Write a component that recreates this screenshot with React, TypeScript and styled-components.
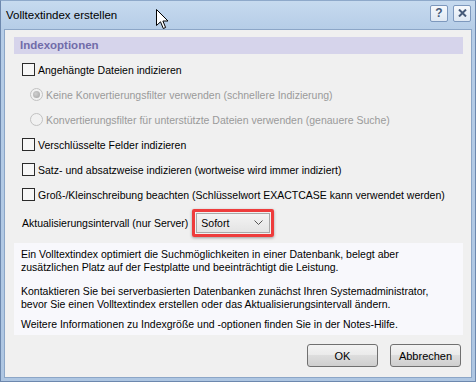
import React from 'react';
import styled, { createGlobalStyle } from 'styled-components';

const GlobalStyle = createGlobalStyle`
  html, body { margin: 0; padding: 0; background: #ffffff; }
  body { font-family: "Liberation Sans", Arial, sans-serif; }
`;

const Window = styled.div`
  position: relative;
  width: 476px;
  height: 382px;
  box-sizing: border-box;
  display: flex;
  flex-direction: column;
  background: linear-gradient(#c6daef, #b6cde7 28px, #aec6e2);
  border: 1px solid #6d88ae;
  border-top-color: #8ea9ca;
`;

const TitleBar = styled.div`
  height: 28px;
  flex: none;
  display: flex;
  align-items: center;
  padding: 0 4px 0 5px;
  gap: 5px;
`;

const Title = styled.span`
  font-size: 11.5px;
  color: #000;
  flex: 1;
`;

const CaptionButton = styled.div`
  width: 18px;
  height: 17px;
  box-sizing: border-box;
  display: flex;
  align-items: center;
  justify-content: center;
  border: 1px solid #7d98bd;
  border-radius: 2px;
  background: linear-gradient(#f6f9fc, #dfe8f3);
  color: #465a78;
  font-size: 12px;
  font-weight: bold;
  margin-top: -4px;
`;

const Body = styled.div`
  flex: 1;
  display: flex;
  flex-direction: column;
  margin: 0 3px 3px;
  background: #f0f0f0;
  border: 1px solid #8ca6c7;
  padding: 7px 8px 0 9px;
`;

const SectionHeader = styled.div`
  height: 17px;
  line-height: 17px;
  padding-left: 6px;
  background: #d6d4eb;
  color: #716ca9;
  font-size: 11.5px;
  font-weight: bold;
`;

const Options = styled.div`
  display: flex;
  flex-direction: column;
  padding-left: 8px;
  margin-top: 3px;
`;

const Row = styled.div<{ $indent?: boolean; $tall?: boolean }>`
  height: ${({ $tall }) => ($tall ? '31px' : '25px')};
  display: flex;
  align-items: center;
  gap: 3px;
  padding-left: ${({ $indent }) => ($indent ? '8px' : '0')};
  font-size: 10.5px;
  color: #000;
  white-space: nowrap;
`;

const Label = styled.span<{ $disabled?: boolean }>`
  color: ${({ $disabled }) => ($disabled ? '#9a9a9a' : '#000')};
`;

const CheckBox = styled.span`
  width: 13px;
  height: 13px;
  box-sizing: border-box;
  border: 1px solid #2b2b2b;
  background: #f7f7f7;
  flex: none;
`;

const Radio = styled.span<{ $checked?: boolean }>`
  width: 13px;
  height: 13px;
  box-sizing: border-box;
  border-radius: 50%;
  border: 1px solid #c2c2c2;
  background: #f1f1f1;
  flex: none;
  display: flex;
  align-items: center;
  justify-content: center;
  &::after {
    content: '';
    display: ${({ $checked }) => ($checked ? 'block' : 'none')};
    width: 7px;
    height: 7px;
    border-radius: 50%;
    background: radial-gradient(circle at 40% 40%, #d0d0d0, #a3a3a3);
  }
`;

const Highlight = styled.div`
  margin-left: 1px;
  padding: 1px;
  border: 3px solid #ee3c3c;
  border-radius: 2px;
  box-shadow: 0 1px 3px rgba(0, 0, 0, 0.35);
`;

const Select = styled.div`
  width: 74px;
  height: 20px;
  box-sizing: border-box;
  border: 1px solid #a9a9a9;
  background: linear-gradient(#f3f3f3, #e4e4e4);
  display: flex;
  align-items: center;
  justify-content: space-between;
  padding: 0 6px 0 4px;
  font-size: 10.5px;
  color: #000;
`;

const InfoPanel = styled.div`
  margin-top: 5px;
  background: #f8f8fc;
  padding: 5px 6px 4px 7px;
  font-size: 10.5px;
  line-height: 13px;
  color: #000;
`;

const Para = styled.p<{ $gap: number }>`
  margin: 0 0 ${({ $gap }) => $gap}px;
`;

const Buttons = styled.div`
  display: flex;
  justify-content: flex-end;
  gap: 12px;
  margin-top: 9px;
  padding-right: 2px;
`;

const Button = styled.button`
  width: 71px;
  height: 23px;
  border: 1px solid #707070;
  border-radius: 3px;
  background: linear-gradient(#f3f3f3 0%, #ebebeb 45%, #dddddd 50%, #cfcfcf 100%);
  font-family: "Liberation Sans", Arial, sans-serif;
  font-size: 11px;
  color: #000;
  padding: 0;
`;

const Cursor = styled.svg`
  position: absolute;
  left: 155px;
  top: 8px;
`;

export default function App() {
  return (
    <>
      <GlobalStyle />
      <Window>
        <TitleBar>
          <Title>Volltextindex erstellen</Title>
          <CaptionButton>?</CaptionButton>
          <CaptionButton>
            <svg width="9" height="8" viewBox="0 0 9 8">
              <path d="M1 0.5 L8 7.5 M8 0.5 L1 7.5" stroke="#465a78" strokeWidth="2" />
            </svg>
          </CaptionButton>
        </TitleBar>
        <Body>
          <SectionHeader>Indexoptionen</SectionHeader>
          <Options>
            <Row>
              <CheckBox />
              <Label>Angehängte Dateien indizieren</Label>
            </Row>
            <Row $indent>
              <Radio $checked />
              <Label $disabled>Keine Konvertierungsfilter verwenden (schnellere Indizierung)</Label>
            </Row>
            <Row $indent>
              <Radio />
              <Label $disabled>Konvertierungsfilter für unterstützte Dateien verwenden (genauere Suche)</Label>
            </Row>
            <Row>
              <CheckBox />
              <Label>Verschlüsselte Felder indizieren</Label>
            </Row>
            <Row>
              <CheckBox />
              <Label>Satz- und absatzweise indizieren (wortweise wird immer indiziert)</Label>
            </Row>
            <Row>
              <CheckBox />
              <Label>Groß-/Kleinschreibung beachten (Schlüsselwort EXACTCASE kann verwendet werden)</Label>
            </Row>
            <Row $tall>
              <Label>Aktualisierungsintervall (nur Server)</Label>
              <Highlight>
                <Select>
                  <span>Sofort</span>
                  <svg width="9" height="5" viewBox="0 0 9 5">
                    <path d="M0.5 0.5 L4.5 4.5 L8.5 0.5" fill="none" stroke="#555" strokeWidth="1" />
                  </svg>
                </Select>
              </Highlight>
            </Row>
          </Options>
          <InfoPanel>
            <Para $gap={11}>
              Ein Volltextindex optimiert die Suchmöglichkeiten in einer Datenbank, belegt aber
              <br />
              zusätzlichen Platz auf der Festplatte und beeinträchtigt die Leistung.
            </Para>
            <Para $gap={7}>
              Kontaktieren Sie bei serverbasierten Datenbanken zunächst Ihren Systemadministrator,
              <br />
              bevor Sie einen Volltextindex erstellen oder das Aktualisierungsintervall ändern.
            </Para>
            <Para $gap={0}>Weitere Informationen zu Indexgröße und -optionen finden Sie in der Notes-Hilfe.</Para>
          </InfoPanel>
          <Buttons>
            <Button>OK</Button>
            <Button>Abbrechen</Button>
          </Buttons>
        </Body>
        <Cursor width="13" height="21" viewBox="0 0 13 21">
          <path
            d="M0.5 0.5 L0.5 16.5 L4.5 12.8 L7.3 19.5 L9.6 18.5 L6.9 12 L12 12 Z"
            fill="#fff"
            stroke="#000"
            strokeWidth="1"
            strokeLinejoin="round"
          />
        </Cursor>
      </Window>
    </>
  );
}
